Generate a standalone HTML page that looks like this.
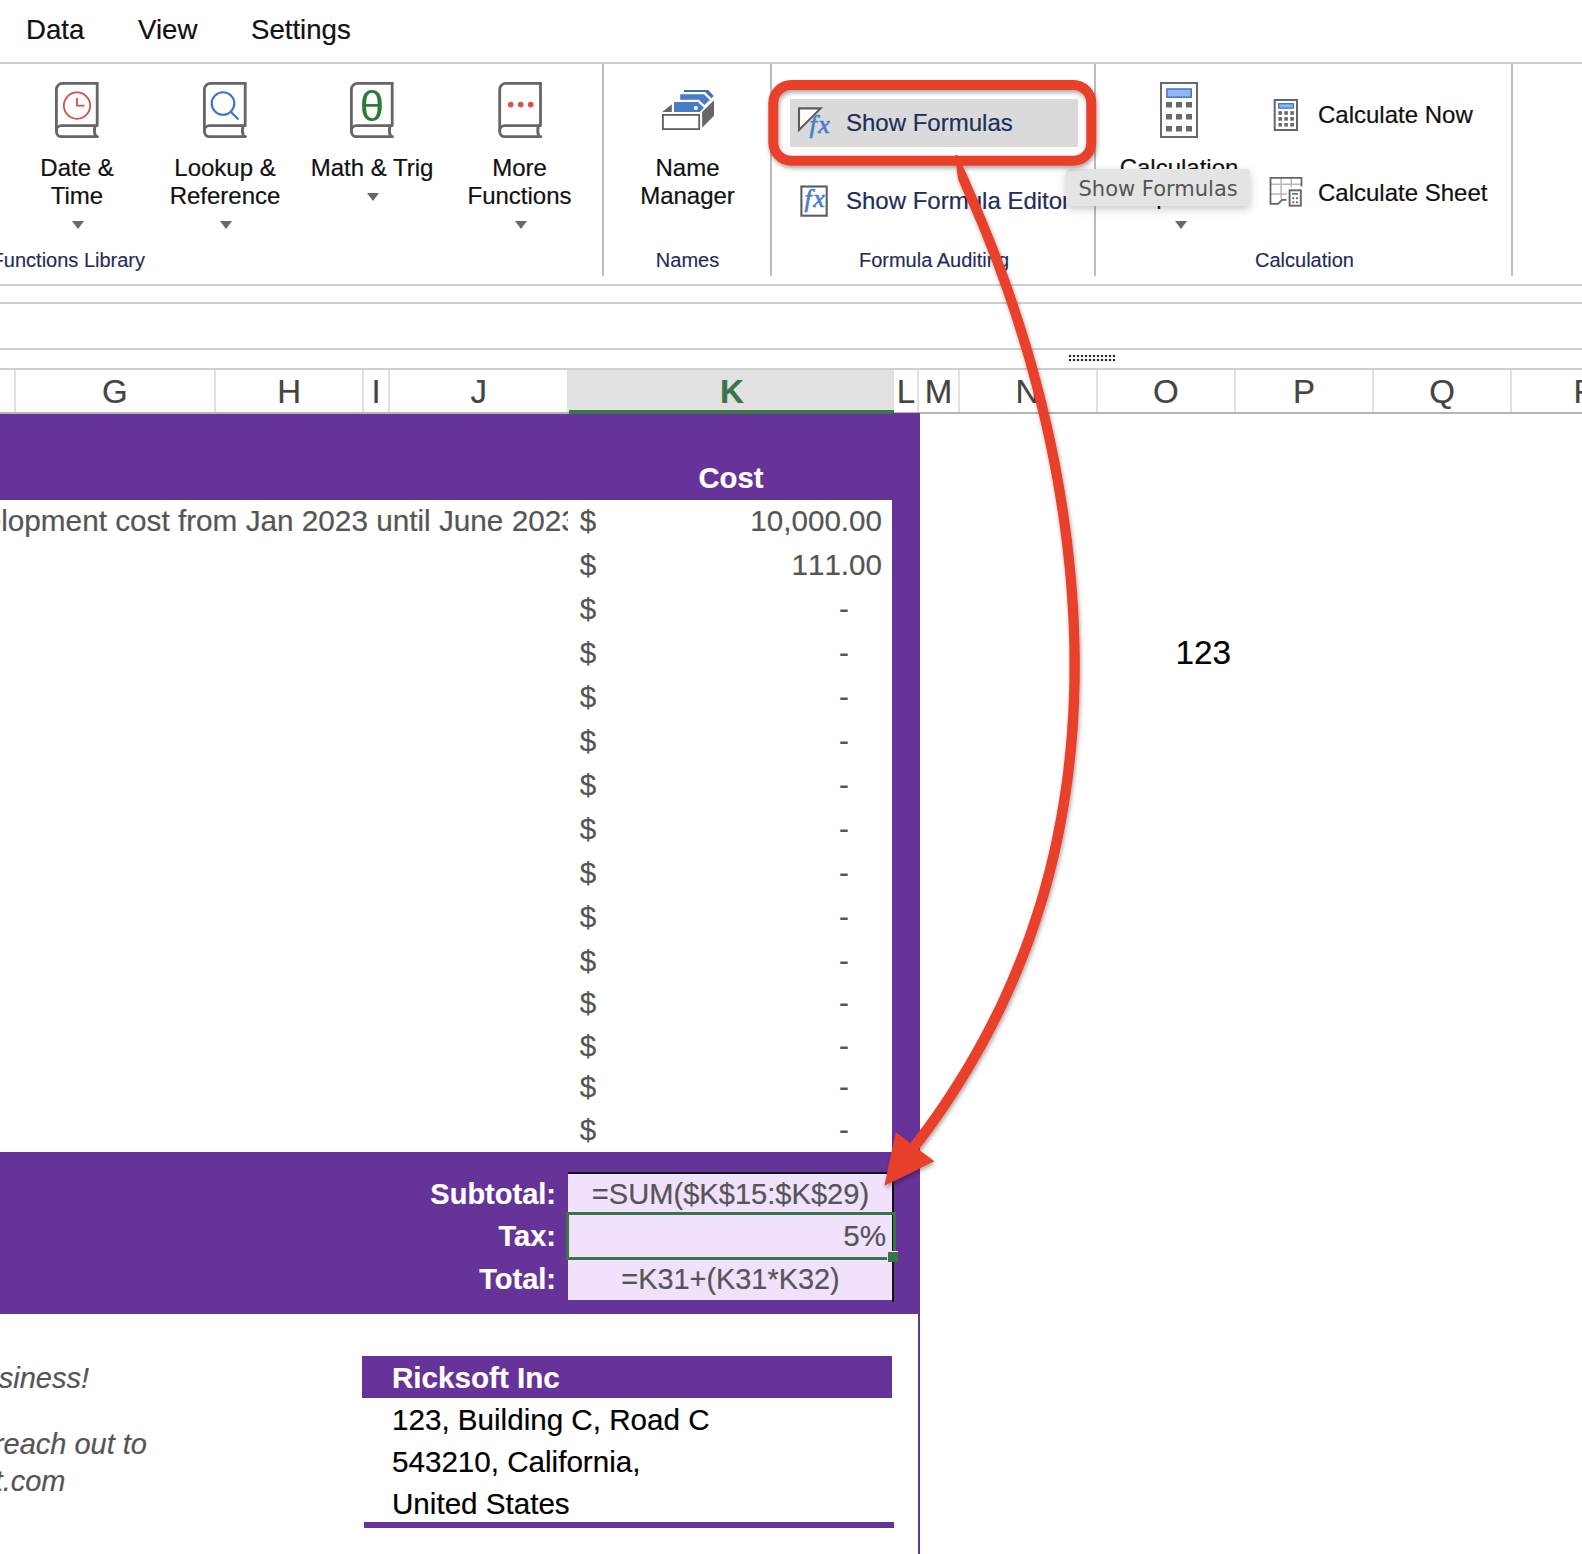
<!DOCTYPE html>
<html>
<head>
<meta charset="utf-8">
<title>Show Formulas</title>
<style>
html,body{margin:0;padding:0;}
body{-webkit-text-stroke:0.2px;width:1582px;height:1554px;position:relative;overflow:hidden;background:#fff;font-family:"Liberation Sans",Arial,sans-serif;color:#000;}
.abs{position:absolute;}
.hl{position:absolute;left:0;width:1582px;height:2px;background:#cfcfcf;}
.vl{position:absolute;width:2px;background:#b9bcc4;}
.menu{position:absolute;top:13.5px;font-size:27.6px;line-height:32px;color:#111;white-space:nowrap;}
.rl{position:absolute;font-size:24px;line-height:28px;text-align:center;color:#111;white-space:nowrap;transform:translateX(-50%);}
.gl{-webkit-text-stroke:0.15px;position:absolute;font-size:20px;line-height:24px;color:#1f2d5a;white-space:nowrap;}
.tri{position:absolute;width:0;height:0;margin-left:-0.5px;margin-top:-0.6px;border-left:6.5px solid transparent;border-right:6.5px solid transparent;border-top:8.2px solid #696969;}
.ch{position:absolute;top:370px;height:42px;font-size:33px;line-height:43px;margin-left:1px;color:#444;text-align:center;box-sizing:border-box;border-right:2px solid #dde3dd;}
.cell{position:absolute;font-kerning:none;font-size:29.6px;line-height:44px;color:#555;white-space:nowrap;}
.purple{background:#663399;}
</style>
</head>
<body>
<!-- MENU -->
<div class="menu" style="left:26px;">Data</div>
<div class="menu" style="left:138px;">View</div>
<div class="menu" style="left:251px;">Settings</div>
<div class="hl" style="top:62px;"></div>
<!-- RIBBON -->

<!-- book icons -->
<svg class="abs" style="left:0;top:64px;" width="1582" height="222" viewBox="0 64 1582 222">
  <defs>
    <g id="book" fill="none" stroke="#666" stroke-width="2.8" stroke-linejoin="round" stroke-linecap="round">
      <path d="M42.2,1.4 H7.4 a6,6 0 0 0 -6,6 V49.6 a5,5 0 0 0 5,5 H42.6"/>
      <path d="M42.2,1.4 V43.6 H6.4 a5,5 0 0 0 -5,5"/>
      <path d="M40,44 C39.2,47 39.2,51 40.6,54.4"/>
    </g>
  </defs>
  <use href="#book" x="55" y="82"/>
  <use href="#book" x="203" y="82"/>
  <use href="#book" x="350" y="82"/>
  <use href="#book" x="498.3" y="82"/>
  <!-- clock -->
  <g fill="none" stroke="#d4504a" stroke-width="1.8">
    <circle cx="77" cy="105.6" r="13.2"/>
    <path d="M77,98 V105.6 H84.5"/>
  </g>
  <!-- magnifier -->
  <g fill="none" stroke="#3b74cf" stroke-width="2.1">
    <circle cx="223" cy="103.5" r="11.3"/>
    <path d="M231,112 L238.5,119.5"/>
  </g>
  <!-- dots -->
  <g fill="#d9534a"><circle cx="510.7" cy="104.6" r="2.9"/><circle cx="520.7" cy="104.6" r="2.9"/><circle cx="530.7" cy="104.6" r="2.9"/></g>
  <!-- name manager -->
  <g>
    <polygon points="684,90.1 708.2,90.1 713.8,96.1 711.4,98.2 705.1,92 684,92" fill="#3f6fbd"/>
    <polygon points="680.2,94.2 703.9,94.2 709.9,100 704.4,105 698.8,99.8 680.2,99.8" fill="#4a7cc5"/>
    <polygon points="674,102 697.8,102 703.9,107.8 699.8,111.9 674,111.9" fill="#4a7cc5"/>
    <circle cx="695.9" cy="108" r="2" fill="#fff"/>
    <polygon points="662.1,111.9 671.8,104.2 671.8,111.9" fill="#676767"/>
    <polygon points="702.1,112.1 714,100.2 714,115.7 702.1,127.8" fill="#676767"/>
    <rect x="662.9" y="114.9" width="36.3" height="14.2" fill="#fff" stroke="#5e5e5e" stroke-width="1.8"/>
  </g>
</svg>
<div class="abs" style="left:359.3px;top:86.2px;width:26px;text-align:center;font-size:42px;line-height:42px;color:#2f7a36;-webkit-text-stroke:0;transform:scaleX(1.04);">θ</div>

<div class="rl" style="left:77px;top:154px;">Date &amp;<br>Time</div>
<div class="tri" style="left:72px;top:221.5px;"></div>
<div class="rl" style="left:225px;top:154px;">Lookup &amp;<br>Reference</div>
<div class="tri" style="left:220px;top:221.5px;"></div>
<div class="rl" style="left:372px;top:154px;">Math &amp; Trig</div>
<div class="tri" style="left:367px;top:193.5px;"></div>
<div class="rl" style="left:519.5px;top:154px;">More<br>Functions</div>
<div class="tri" style="left:515px;top:221.5px;"></div>
<div class="rl" style="left:687.5px;top:154px;">Name<br>Manager</div>

<div class="gl" style="left:-8.4px;top:248px;">Functions Library</div>
<div class="gl" style="left:687.5px;top:248px;transform:translateX(-50%);">Names</div>
<div class="gl" style="left:934px;top:248px;transform:translateX(-50%);">Formula Auditing</div>
<div class="gl" style="left:1304.5px;top:248px;transform:translateX(-50%);">Calculation</div>

<div class="vl" style="left:602px;top:64px;height:212px;"></div>
<div class="vl" style="left:770px;top:64px;height:212px;"></div>
<div class="vl" style="left:1094px;top:64px;height:212px;"></div>
<div class="vl" style="left:1511px;top:64px;height:212px;"></div>

<!-- Show formulas button -->
<div class="abs" style="left:790px;top:99px;width:288px;height:47.5px;background:#dadada;"></div>
<svg class="abs" style="left:794px;top:100px;" width="44" height="44" viewBox="794 100 44 44">
  <path d="M799,108.4 H820.6 L799,130 Z" fill="#fdfdfd" stroke="#5c5c5c" stroke-width="2.1" stroke-linejoin="miter"/>
  <text x="809.5" y="132.5" font-family="Liberation Serif, serif" font-style="italic" font-size="26" fill="#4a7fd0" stroke="#4a7fd0" stroke-width="0.7" letter-spacing="1.5">fx</text>
</svg>
<div class="abs" style="left:846px;top:108.5px;font-size:24px;line-height:28px;color:#1f2d5a;white-space:nowrap;">Show Formulas</div>
<svg class="abs" style="left:796px;top:180px;" width="40" height="40" viewBox="796 180 40 40">
  <rect x="801.4" y="186.5" width="25.3" height="29.2" fill="#fff" stroke="#5c5c5c" stroke-width="2.1"/>
  <text x="804.5" y="207" font-family="Liberation Serif, serif" font-style="italic" font-size="26" fill="#4a7fd0" stroke="#4a7fd0" stroke-width="0.7" letter-spacing="1.5">fx</text>
</svg>
<div class="abs" style="left:846px;top:187px;font-size:24px;line-height:28px;color:#1f2d5a;white-space:nowrap;">Show Formula Editor</div>

<!-- calculation -->
<svg class="abs" style="left:1150px;top:76px;" width="170" height="140" viewBox="1150 76 170 140">
  <rect x="1161" y="83" width="36" height="54" fill="#fff" stroke="#6a6a6a" stroke-width="2"/>
  <rect x="1166.9" y="89" width="24.3" height="8.2" fill="#8fb8f3" stroke="#3f76c6" stroke-width="1.5"/>
  <g fill="#6a6a6a">
    <rect x="1166" y="102" width="6" height="5.5"/><rect x="1176" y="102" width="6" height="5.5"/><rect x="1186" y="102" width="6" height="5.5"/>
    <rect x="1166" y="114" width="6" height="5.5"/><rect x="1176" y="114" width="6" height="5.5"/><rect x="1186" y="114" width="6" height="5.5"/>
    <rect x="1166" y="126" width="6" height="5.5"/><rect x="1176" y="126" width="6" height="5.5"/><rect x="1186" y="126" width="6" height="5.5"/>
  </g>
  <!-- calc now small -->
  <rect x="1274.7" y="100" width="22.3" height="30" fill="#fff" stroke="#666" stroke-width="2"/>
  <rect x="1278.7" y="103.7" width="14.6" height="4.4" fill="#8fb8f3" stroke="#3f76c6" stroke-width="1.3"/>
  <g fill="#6a6a6a">
    <rect x="1278.4" y="111.2" width="3.6" height="3.6"/><rect x="1284.3" y="111.2" width="3.6" height="3.6"/><rect x="1290.3" y="111.2" width="3.6" height="3.6"/>
    <rect x="1278.4" y="117.1" width="3.6" height="3.6"/><rect x="1284.3" y="117.1" width="3.6" height="3.6"/><rect x="1290.3" y="117.1" width="3.6" height="3.6"/>
    <rect x="1278.4" y="123" width="3.6" height="3.6"/><rect x="1284.3" y="123" width="3.6" height="3.6"/><rect x="1290.3" y="123" width="3.6" height="3.6"/>
  </g>
  <!-- calc sheet -->
  <g fill="none" stroke="#b8b8b8" stroke-width="1.5">
    <path d="M1271,184.3 H1301 M1271,194 H1287 M1281.1,178 V199 M1291.3,178 V187"/>
  </g>
  <g fill="none" stroke="#666" stroke-width="1.8">
    <path d="M1301.5,186.5 V177.8 H1270.5 V203.8 H1278.2 L1282,199.8 H1286.5"/>
  </g>
  <rect x="1289.6" y="190.3" width="11.2" height="15.4" fill="#fff" stroke="#666" stroke-width="1.9"/>
  <rect x="1292" y="193" width="6" height="1.7" fill="#3f76c6"/>
  <g fill="#666">
    <rect x="1292.3" y="197.3" width="1.9" height="1.9"/><rect x="1296" y="197.3" width="1.9" height="1.9"/>
    <rect x="1292.3" y="201.3" width="1.9" height="1.9"/><rect x="1296" y="201.3" width="1.9" height="1.9"/>
  </g>
</svg>
<div class="rl" style="left:1179px;top:154px;">Calculation<br>Options</div>
<div class="tri" style="left:1175px;top:221.5px;"></div>
<div class="abs" style="left:1318px;top:100.5px;font-size:24px;line-height:28px;color:#111;white-space:nowrap;">Calculate Now</div>
<div class="abs" style="left:1318px;top:178.5px;font-size:24px;line-height:28px;color:#111;white-space:nowrap;">Calculate Sheet</div>

<div class="hl" style="top:284px;"></div>
<div class="hl" style="top:302px;"></div>
<div class="hl" style="top:348px;"></div>
<div class="hl" style="top:368px;"></div>

<!-- SHEET -->

<div class="abs" style="left:0;top:412px;width:1582px;height:2px;background:#b4b4b4;"></div>
<div class="ch" style="left:-100px;width:114.7px;"></div>
<div class="ch" style="left:14.7px;width:200.3px;">G</div>
<div class="ch" style="left:215px;width:148.3px;">H</div>
<div class="ch" style="left:363.3px;width:25.69999999999999px;">I</div>
<div class="ch" style="left:389px;width:179.39999999999998px;">J</div>
<div class="ch" style="left:568.4px;width:324.9px;background:#e1e1e1;color:#3a7449;font-weight:bold;border-right:none;height:44px;border-bottom:4px solid #3a7449;">K</div>
<div class="ch" style="left:893.3px;width:25.200000000000045px;">L</div>
<div class="ch" style="left:918.5px;width:40.0px;">M</div>
<div class="ch" style="left:958.5px;width:138.0px;">N</div>
<div class="ch" style="left:1096.5px;width:138.5px;">O</div>
<div class="ch" style="left:1235px;width:138px;">P</div>
<div class="ch" style="left:1373px;width:138px;">Q</div>
<div class="ch" style="left:1511px;width:149px;">R</div>

<!-- drag handle dots -->
<div class="abs" style="left:1068px;top:354px;width:48px;height:8px;background-image:radial-gradient(circle,#2a2a2a 0.8px,rgba(40,40,40,0.4) 1.2px,transparent 1.7px);background-size:4px 4px;"></div>
<!-- purple blocks -->
<div class="abs purple" style="left:0;top:414px;width:920px;height:85.6px;"></div>
<div class="abs purple" style="left:892px;top:413px;width:28px;height:900px;"></div>
<div class="abs purple" style="left:0;top:1152.4px;width:920px;height:161.2px;"></div>
<div class="abs purple" style="left:917.5px;top:1300px;width:2.3px;height:260px;"></div>
<div class="abs" style="left:698.5px;top:456.2px;font-size:29.2px;line-height:44px;font-weight:bold;color:#fff;">Cost</div>
<div class="abs" style="left:0;top:498.7px;width:568px;height:44px;overflow:hidden;"><div class="cell" style="left:-68.2px;top:0;font-size:29.72px;">Development cost from Jan 2023 until June 2023</div></div>
<div class="cell" style="left:579.7px;top:498.7px;">$</div><div class="cell" style="right:700px;top:498.7px;">10,000.00</div>
<div class="cell" style="left:579.7px;top:542.7px;">$</div><div class="cell" style="right:700px;top:542.7px;">111.00</div>
<div class="cell" style="left:579.7px;top:586.7px;">$</div><div class="cell" style="left:839px;top:586.7px;">-</div>
<div class="cell" style="left:579.7px;top:630.7px;">$</div><div class="cell" style="left:839px;top:630.7px;">-</div>
<div class="cell" style="left:579.7px;top:674.7px;">$</div><div class="cell" style="left:839px;top:674.7px;">-</div>
<div class="cell" style="left:579.7px;top:718.7px;">$</div><div class="cell" style="left:839px;top:718.7px;">-</div>
<div class="cell" style="left:579.7px;top:762.7px;">$</div><div class="cell" style="left:839px;top:762.7px;">-</div>
<div class="cell" style="left:579.7px;top:806.7px;">$</div><div class="cell" style="left:839px;top:806.7px;">-</div>
<div class="cell" style="left:579.7px;top:850.7px;">$</div><div class="cell" style="left:839px;top:850.7px;">-</div>
<div class="cell" style="left:579.7px;top:894.7px;">$</div><div class="cell" style="left:839px;top:894.7px;">-</div>
<div class="cell" style="left:579.7px;top:938.7px;">$</div><div class="cell" style="left:839px;top:938.7px;">-</div>
<div class="cell" style="left:579.7px;top:980.8px;">$</div><div class="cell" style="left:839px;top:980.8px;">-</div>
<div class="cell" style="left:579.7px;top:1023.5px;">$</div><div class="cell" style="left:839px;top:1023.5px;">-</div>
<div class="cell" style="left:579.7px;top:1065.3px;">$</div><div class="cell" style="left:839px;top:1065.3px;">-</div>
<div class="cell" style="left:579.7px;top:1107.8px;">$</div><div class="cell" style="left:839px;top:1107.8px;">-</div>

<div class="abs" style="left:1175.5px;top:630.5px;font-size:33.3px;line-height:44px;color:#000;font-kerning:none;">123</div>
<!-- totals -->
<div class="abs" style="left:568px;top:1172px;width:325px;height:128px;background:#f0e1fc;"></div>
<div class="abs" style="left:568px;top:1171.5px;width:326px;height:2px;background:#111;"></div>
<div class="abs" style="left:892px;top:1171.5px;width:2px;height:130px;background:#111;"></div>
<div class="abs" style="left:566px;top:1212px;width:330.3px;height:47.7px;box-sizing:border-box;border:3.8px solid #3a7449;"></div>
<div class="abs" style="left:886.5px;top:1250.5px;width:11px;height:11px;background:#3a7449;border:1.5px solid #f0e1fc;border-right:none;border-bottom:none;box-sizing:border-box;"></div>
<div class="cell" style="left:568px;width:325px;text-align:center;top:1171.5px;font-size:29.1px;">=SUM($K$15:$K$29)</div>
<div class="cell" style="right:696px;top:1214px;">5%</div>
<div class="cell" style="left:568px;width:325px;text-align:center;top:1257px;font-size:28.9px;">=K31+(K31*K32)</div>
<div class="abs" style="right:1026px;top:1171.5px;font-size:29px;line-height:44px;font-weight:bold;color:#fff;">Subtotal:</div>
<div class="abs" style="right:1026px;top:1214px;font-size:29px;line-height:44px;font-weight:bold;color:#fff;">Tax:</div>
<div class="abs" style="right:1026px;top:1257px;font-size:29px;line-height:44px;font-weight:bold;color:#fff;">Total:</div>
<!-- address -->
<div class="abs purple" style="left:362px;top:1356.4px;width:530px;height:41.2px;"></div>
<div class="abs" style="left:392px;top:1356.2px;font-size:29.6px;line-height:44px;font-weight:bold;color:#fff;font-kerning:none;">Ricksoft Inc</div>
<div class="abs" style="left:392px;top:1399.3px;font-size:29.6px;font-kerning:none;line-height:42px;color:#000;white-space:nowrap;">123, Building C, Road C<br>543210, California,<br>United States</div>
<div class="abs purple" style="left:364px;top:1522px;width:530px;height:6px;"></div>
<!-- italic -->
<div class="abs" style="right:1493px;top:1356px;font-size:29px;line-height:44px;font-style:italic;color:#555;white-space:nowrap;">Thank you for your business!</div>
<div class="abs" style="right:1435px;top:1422px;font-size:29px;line-height:44px;font-style:italic;color:#555;white-space:nowrap;">If you have any questions, please reach out to</div>
<div class="abs" style="right:1516.5px;top:1458.5px;font-size:29px;line-height:44px;font-style:italic;color:#555;white-space:nowrap;">billing@ricksoft.com</div>

<!-- tooltip -->
<div class="abs" style="left:1066px;top:169px;width:184px;height:37px;background:#e4e4e4;border-radius:4px;box-shadow:0 3px 8px rgba(0,0,0,0.22);"></div>
<div class="abs" style="left:1078.5px;top:175px;font-family:'DejaVu Sans',sans-serif;font-size:21px;-webkit-text-stroke:0;line-height:28px;color:#555;white-space:nowrap;">Show Formulas</div>
<!-- red annotation -->
<svg class="abs" style="left:0;top:0;" width="1582" height="1554" viewBox="0 0 1582 1554">
  <defs><filter id="sh" x="-5%" y="-5%" width="110%" height="110%"><feDropShadow dx="1" dy="2.5" stdDeviation="2" flood-color="#000" flood-opacity="0.35"/></filter></defs>
  <g filter="url(#sh)">
  <rect x="773.3" y="85" width="318" height="75.7" rx="18" ry="18" fill="none" stroke="#e8412a" stroke-width="10"/>
  <polygon id="shaft" points="955.0,155.3 956.4,167.1 958.0,179.1 962.8,190.5 967.7,201.7 972.5,212.9 977.2,224.0 981.7,235.1 986.1,246.3 990.4,257.4 994.6,268.5 998.6,279.7 1002.6,290.8 1006.4,302.0 1010.1,313.1 1013.7,324.2 1017.2,335.4 1020.6,346.5 1023.9,357.6 1027.0,368.8 1030.1,379.9 1033.0,391.0 1035.8,402.2 1038.5,413.3 1041.1,424.5 1043.6,435.6 1046.0,446.7 1048.3,457.9 1050.4,469.0 1052.5,480.1 1054.4,491.2 1056.2,502.4 1057.9,513.5 1059.5,524.6 1061.0,535.8 1062.4,546.9 1063.6,558.0 1064.8,569.1 1065.8,580.3 1066.7,591.4 1067.4,602.5 1068.1,613.6 1068.6,624.8 1069.0,635.9 1069.3,647.0 1069.4,658.1 1069.4,669.2 1069.3,680.4 1069.1,691.5 1068.7,702.6 1068.2,713.7 1067.5,724.8 1066.7,735.9 1065.7,747.0 1064.6,758.2 1063.4,769.3 1062.0,780.4 1060.4,791.5 1058.7,802.6 1056.8,813.7 1054.7,824.8 1052.5,835.9 1050.2,847.0 1047.6,858.1 1044.9,869.2 1041.9,880.3 1038.9,891.4 1035.6,902.5 1032.1,913.6 1028.4,924.7 1024.6,935.8 1020.5,946.9 1016.2,958.0 1011.7,969.1 1007.0,980.2 1002.1,991.3 997.0,1002.4 991.6,1013.5 986.0,1024.6 980.1,1035.7 974.1,1046.8 967.7,1057.9 961.2,1069.0 954.3,1080.1 947.2,1091.2 939.9,1102.3 932.2,1113.4 924.3,1124.5 916.1,1135.6 907.6,1146.8 916.1,1153.2 924.7,1142.0 933.0,1130.8 941.0,1119.5 948.7,1108.3 956.2,1097.0 963.3,1085.8 970.3,1074.5 976.9,1063.2 983.3,1052.0 989.5,1040.7 995.4,1029.5 1001.1,1018.2 1006.5,1006.9 1011.7,995.7 1016.7,984.4 1021.5,973.1 1026.0,961.9 1030.4,950.6 1034.5,939.4 1038.4,928.1 1042.1,916.8 1045.6,905.6 1049.0,894.3 1052.1,883.1 1055.0,871.8 1057.8,860.5 1060.4,849.3 1062.8,838.0 1065.0,826.8 1067.1,815.5 1069.0,804.3 1070.7,793.0 1072.3,781.8 1073.7,770.5 1075.0,759.3 1076.1,748.0 1077.1,736.8 1077.9,725.5 1078.5,714.3 1079.1,703.0 1079.4,691.8 1079.7,680.5 1079.8,669.3 1079.8,658.1 1079.6,646.8 1079.3,635.6 1078.9,624.3 1078.4,613.1 1077.7,601.9 1076.9,590.6 1076.0,579.4 1075.0,568.2 1073.8,556.9 1072.6,545.7 1071.2,534.5 1069.7,523.2 1068.1,512.0 1066.3,500.8 1064.5,489.5 1062.5,478.3 1060.5,467.1 1058.3,455.9 1056.0,444.6 1053.6,433.4 1051.1,422.2 1048.4,411.0 1045.7,399.7 1042.8,388.5 1039.9,377.3 1036.8,366.1 1033.6,354.8 1030.3,343.6 1026.9,332.4 1023.4,321.2 1019.7,309.9 1016.0,298.7 1012.1,287.5 1008.1,276.3 1004.0,265.0 999.8,253.8 995.5,242.6 991.0,231.4 986.4,220.2 981.7,208.9 976.9,197.7 972.0,186.6 967.4,175.7 962.3,165.3 956.9,154.7" fill="#e8412a"/>
  <polygon points="884.4,1185.7 895.8,1132.2 934.4,1161.2" fill="#e8412a"/>
  </g>
</svg>

</body>
</html>
